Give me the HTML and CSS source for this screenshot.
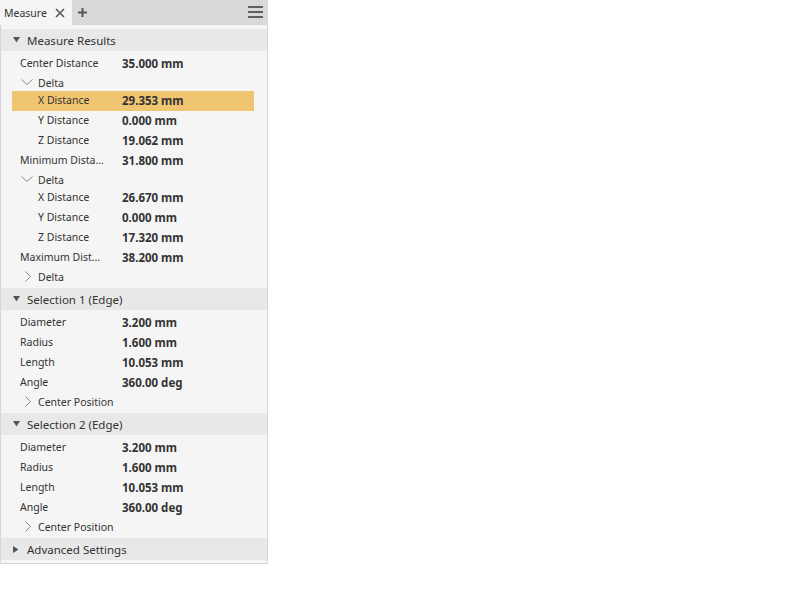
FILE: index.html
```html
<!DOCTYPE html>
<html>
<head>
<meta charset="utf-8">
<link rel="stylesheet" href="styles.css">
</head>
<body>
<div class="panel">
  <div class="tabbar">
    <div class="tab">
      <span class="tab-title">Measure</span>
      <svg class="tab-close" width="10" height="10" viewBox="0 0 10 10"><path d="M1 1L9 9M9 1L1 9" stroke="#555" stroke-width="1.5" fill="none"/></svg>
    </div>
    <svg class="tab-add" width="11" height="11" viewBox="0 0 11 11"><path d="M5.5 1V10M1 5.5H10" stroke="#555" stroke-width="2" fill="none"/></svg>
    <div class="spacer"></div>
    <svg class="menu" width="15" height="13" viewBox="0 0 15 13"><path d="M0 1H15M0 6H15M0 11H15" stroke="#5f5f5f" stroke-width="2" fill="none"/></svg>
  </div>
  <div class="body">
    <div class="section">
      <div class="sec-head"><svg class="tri" width="7" height="6" viewBox="0 0 7 6"><path d="M0 0H7L3.5 5.5Z" fill="#555"/></svg><span>Measure Results</span></div>
      <div class="rows">
        <div class="row"><span class="label">Center Distance</span><span class="value">35.000 mm</span></div>
        <div class="row group"><svg class="chev" width="12" height="7" viewBox="0 0 12 7"><path d="M0.5 0.5L6 5.5L11.5 0.5" stroke="#8a8a8a" stroke-width="1" fill="none"/></svg><span>Delta</span></div>
        <div class="row sub selected"><span class="label">X Distance</span><span class="value">29.353 mm</span></div>
        <div class="row sub"><span class="label">Y Distance</span><span class="value">0.000 mm</span></div>
        <div class="row sub"><span class="label">Z Distance</span><span class="value">19.062 mm</span></div>
        <div class="row"><span class="label">Minimum Distance</span><span class="value">31.800 mm</span></div>
        <div class="row group"><svg class="chev" width="12" height="7" viewBox="0 0 12 7"><path d="M0.5 0.5L6 5.5L11.5 0.5" stroke="#8a8a8a" stroke-width="1" fill="none"/></svg><span>Delta</span></div>
        <div class="row sub"><span class="label">X Distance</span><span class="value">26.670 mm</span></div>
        <div class="row sub"><span class="label">Y Distance</span><span class="value">0.000 mm</span></div>
        <div class="row sub"><span class="label">Z Distance</span><span class="value">17.320 mm</span></div>
        <div class="row"><span class="label">Maximum Distance</span><span class="value">38.200 mm</span></div>
        <div class="row group"><svg class="chev-r" width="7" height="11" viewBox="0 0 7 11"><path d="M0.5 0.5L5.5 5.5L0.5 10.5" stroke="#8a8a8a" stroke-width="1" fill="none"/></svg><span>Delta</span></div>
      </div>
    </div>
    <div class="section">
      <div class="sec-head"><svg class="tri" width="7" height="6" viewBox="0 0 7 6"><path d="M0 0H7L3.5 5.5Z" fill="#555"/></svg><span>Selection 1 (Edge)</span></div>
      <div class="rows">
        <div class="row"><span class="label">Diameter</span><span class="value">3.200 mm</span></div>
        <div class="row"><span class="label">Radius</span><span class="value">1.600 mm</span></div>
        <div class="row"><span class="label">Length</span><span class="value">10.053 mm</span></div>
        <div class="row"><span class="label">Angle</span><span class="value">360.00 deg</span></div>
        <div class="row group"><svg class="chev-r" width="7" height="11" viewBox="0 0 7 11"><path d="M0.5 0.5L5.5 5.5L0.5 10.5" stroke="#8a8a8a" stroke-width="1" fill="none"/></svg><span>Center Position</span></div>
      </div>
    </div>
    <div class="section">
      <div class="sec-head"><svg class="tri" width="7" height="6" viewBox="0 0 7 6"><path d="M0 0H7L3.5 5.5Z" fill="#555"/></svg><span>Selection 2 (Edge)</span></div>
      <div class="rows">
        <div class="row"><span class="label">Diameter</span><span class="value">3.200 mm</span></div>
        <div class="row"><span class="label">Radius</span><span class="value">1.600 mm</span></div>
        <div class="row"><span class="label">Length</span><span class="value">10.053 mm</span></div>
        <div class="row"><span class="label">Angle</span><span class="value">360.00 deg</span></div>
        <div class="row group"><svg class="chev-r" width="7" height="11" viewBox="0 0 7 11"><path d="M0.5 0.5L5.5 5.5L0.5 10.5" stroke="#8a8a8a" stroke-width="1" fill="none"/></svg><span>Center Position</span></div>
      </div>
    </div>
    <div class="section collapsed">
      <div class="sec-head"><svg class="tri-r" width="6" height="7" viewBox="0 0 6 7"><path d="M0 0V7L5.5 3.5Z" fill="#555"/></svg><span>Advanced Settings</span></div>
    </div>
  </div>
</div>
</body>
</html>
```
FILE: styles.css
```css
html, body {
  margin: 0;
  padding: 0;
  background: #ffffff;
}
body {
  font-family: "Noto Sans", "Open Sans", sans-serif;
  color: #333333;
}
.panel {
  width: 268px;
}
.tabbar {
  height: 25px;
  background: #d9d9d9;
  display: flex;
  align-items: center;
}
.tab {
  width: 72px;
  height: 25px;
  background: #f5f5f5;
  display: flex;
  align-items: center;
  box-sizing: border-box;
  padding-left: 4px;
}
.tab-title {
  font-size: 10.5px;
  color: #333;
  width: 51px;
}
.tab-close {
  margin-left: 0;
}
.tab-add {
  margin-left: 5px;
}
.spacer {
  flex: 1;
}
.menu {
  margin-right: 5px;
}
.body {
  background: #f5f5f5;
  border: 1px solid #d6d6d6;
  border-top: none;
  padding: 4px 0 3px 0;
}
.sec-head {
  height: 22px;
  background: #e8e8e8;
  display: flex;
  align-items: center;
  font-size: 11.5px;
  color: #333;
}
.sec-head .tri {
  margin-left: 12px;
  margin-right: 7px;
}
.sec-head .tri-r {
  margin-left: 12px;
  margin-right: 8px;
}
.rows {
  padding: 3px 0;
}
.row {
  height: 20px;
  margin-left: 11px;
  width: 242px;
  display: flex;
  align-items: center;
  font-size: 10.5px;
  box-sizing: border-box;
  padding-bottom: 2px;
}
.row .label {
  width: 102px;
  padding-left: 8px;
  padding-right: 10px;
  box-sizing: border-box;
  white-space: nowrap;
  overflow: hidden;
  text-overflow: ellipsis;
}
.row .value {
  font-weight: bold;
  font-size: 11.5px;
  padding-left: 8px;
}
.row.sub .label {
  padding-left: 26px;
}
.row.group {
  height: 17px;
  padding-bottom: 0;
}
.row.group .chev {
  margin-left: 9px;
  margin-right: 5px;
}
.row.group .chev-r {
  margin-left: 13px;
  margin-right: 6px;
}
.row.selected {
  background: #f0c572;
}
```
